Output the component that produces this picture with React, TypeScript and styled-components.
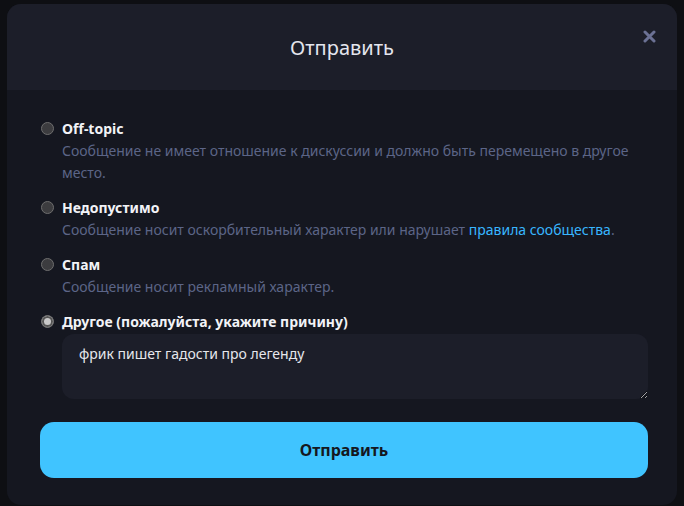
import styled, { createGlobalStyle } from "styled-components";

const Global = createGlobalStyle`
  html, body {
    margin: 0;
    padding: 0;
    background: #0e0f13;
    font-family: "Noto Sans", "Open Sans", sans-serif;
  }
`;

const Page = styled.div`
  width: 684px;
  height: 506px;
  overflow: hidden;
  padding: 4px 7px 0 7px;
  box-sizing: border-box;
`;

const Modal = styled.div`
  width: 670px;
  height: 501px;
  background: #151720;
  border-radius: 14px;
  overflow: hidden;
  display: flex;
  flex-direction: column;
`;

const Header = styled.div`
  position: relative;
  height: 86px;
  background: #1c1e29;
  display: flex;
  align-items: center;
  justify-content: center;
`;

const Title = styled.h2`
  margin: 0;
  font-size: 20px;
  font-weight: 400;
  color: #e4e6ee;
`;

const Close = styled.button`
  position: absolute;
  top: 21px;
  right: 17px;
  width: 22px;
  height: 22px;
  padding: 0;
  border: none;
  background: none;
  display: flex;
  align-items: center;
  justify-content: center;
  cursor: pointer;
`;

const Body = styled.div`
  padding: 28px 29px 0 33px;
  display: flex;
  flex-direction: column;
`;

const Options = styled.div`
  display: flex;
  flex-direction: column;
  gap: 13px;
`;

const Option = styled.label`
  display: grid;
  grid-template-columns: 14px 1fr;
  column-gap: 8px;
  font-size: 14px;
  line-height: 22px;
`;

const Radio = styled.span<{ $checked?: boolean }>`
  width: 13px;
  height: 13px;
  margin-top: 4px;
  margin-left: 1px;
  border-radius: 50%;
  box-sizing: border-box;
  border: 1px solid #6e6e6e;
  background: ${(p) => (p.$checked ? "#c9c9c9" : "#3c3c3f")};
  box-shadow: ${(p) => (p.$checked ? "inset 0 0 0 2px #555" : "none")};
`;

const Name = styled.span`
  font-weight: 700;
  color: #f2f3f7;
`;

const Desc = styled.span`
  grid-column: 2;
  color: #5c6587;
`;

const Rules = styled.a`
  color: #38b6ff;
  text-decoration: none;
`;

const Reason = styled.textarea`
  grid-column: 2;
  margin-top: 1px;
  height: 65px;
  box-sizing: border-box;
  padding: 9px 17px;
  border: none;
  border-radius: 12px;
  background: #1c1e29;
  color: #e6e7ec;
  font-family: inherit;
  font-size: 14px;
  line-height: 22px;
  outline: none;
`;

const Submit = styled.button`
  margin-top: 23px;
  height: 56px;
  border: none;
  border-radius: 14px;
  background: #40c4ff;
  color: #151720;
  font-family: inherit;
  font-size: 16px;
  font-weight: 700;
  cursor: pointer;
`;

const reasons = [
  {
    name: "Off-topic",
    desc: "Сообщение не имеет отношение к дискуссии и должно быть перемещено в другое место.",
  },
  { name: "Недопустимо", desc: null },
  { name: "Спам", desc: "Сообщение носит рекламный характер." },
];

export default function App() {
  return (
    <>
      <Global />
      <Page>
        <Modal>
          <Header>
            <Title>Отправить</Title>
            <Close aria-label="Закрыть">
              <svg width="13" height="13" viewBox="0 0 13 13">
                <path d="M2 2L11 11M11 2L2 11" stroke="#6b7194" strokeWidth="3" strokeLinecap="round" />
              </svg>
            </Close>
          </Header>
          <Body>
            <Options>
              {reasons.map((r) => (
                <Option key={r.name}>
                  <Radio />
                  <Name>{r.name}</Name>
                  <Desc>
                    {r.desc ?? (
                      <>
                        Сообщение носит оскорбительный характер или нарушает{" "}
                        <Rules href="#">правила сообщества</Rules>.
                      </>
                    )}
                  </Desc>
                </Option>
              ))}
              <Option>
                <Radio $checked />
                <Name>Другое (пожалуйста, укажите причину)</Name>
                <Reason defaultValue="фрик пишет гадости про легенду" />
              </Option>
            </Options>
            <Submit>Отправить</Submit>
          </Body>
        </Modal>
      </Page>
    </>
  );
}
